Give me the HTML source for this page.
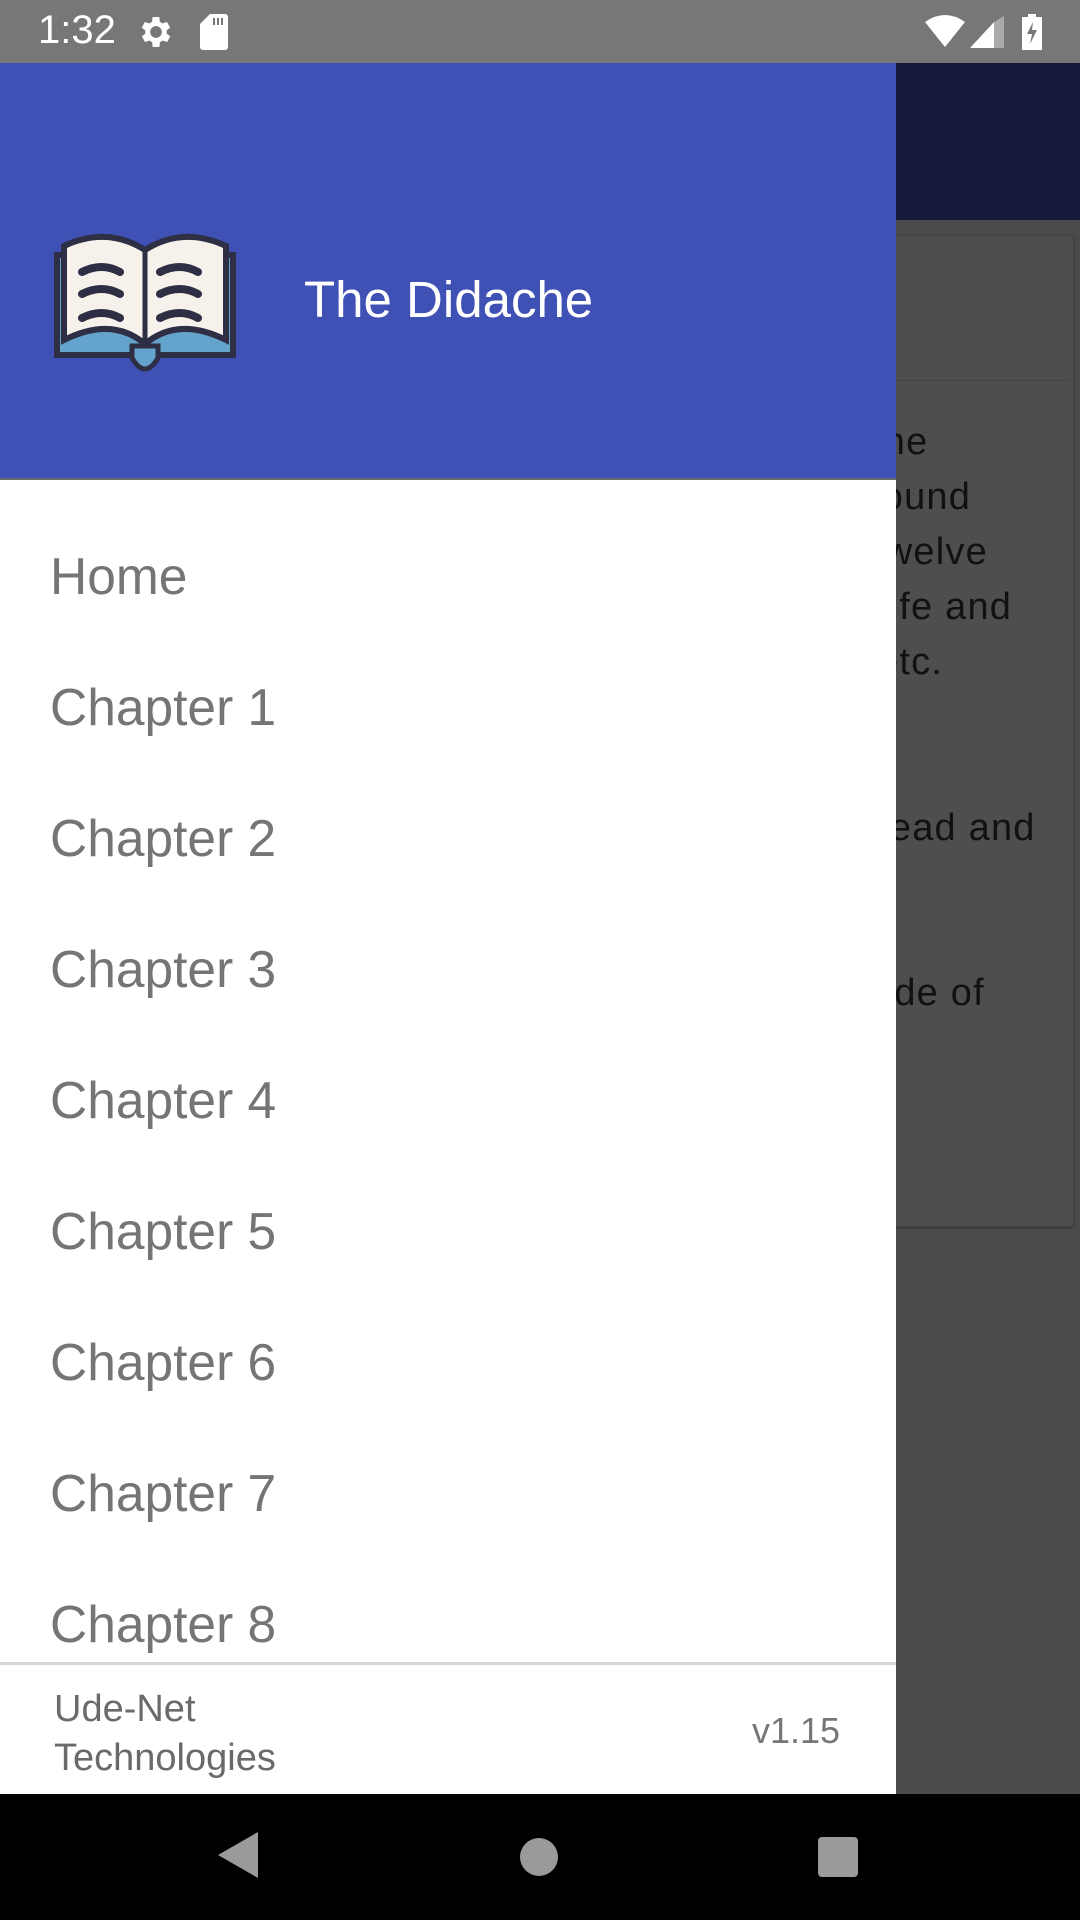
<!DOCTYPE html>
<html><head><meta charset="utf-8"><style>
*{margin:0;padding:0;box-sizing:border-box}
body{width:1080px;height:1920px;overflow:hidden;position:relative;background:#4b4b4b;font-family:"Liberation Sans",Roboto,sans-serif}
.abs{position:absolute}
#status{left:0;top:0;width:1080px;height:63px;background:#777777}
#appbar{left:896px;top:63px;width:184px;height:157px;background:#161939}
#card{left:880px;top:235px;width:194px;height:992px;background:#4e4e4e;border:1px solid #444;border-radius:4px;box-shadow:0 1px 3px rgba(0,0,0,.3)}
#cdiv{left:896px;top:380px;width:175px;height:1px;background:#444}
.ct{left:868px;font-size:38px;color:#111;white-space:nowrap;letter-spacing:1.2px}
#drawer{left:0;top:63px;width:896px;height:1731px;background:#fff}
#hdr{left:0;top:63px;width:896px;height:417px;background:#3f51b5;border-bottom:2px solid #6a6a6a}
.mi{left:50px;font-size:51.5px;color:#757575}
#nav{left:0;top:1794px;width:1080px;height:126px;background:#000}
</style></head><body>
<div class="abs" id="status"></div>
<div class="abs" style="left:38px;top:8px;font-size:40px;color:#fff">1:32</div>
<svg class="abs" style="left:136px;top:12px" width="40" height="40" viewBox="0 0 24 24"><path fill="#fff" d="M19.4 13a7.5 7.5 0 0 0 0-2l2.1-1.6-2-3.5-2.5 1a7 7 0 0 0-1.7-1L15 3h-4l-.4 2.9a7 7 0 0 0-1.7 1l-2.5-1-2 3.5L6.6 11a7.5 7.5 0 0 0 0 2l-2.1 1.6 2 3.5 2.5-1a7 7 0 0 0 1.7 1L11 21h4l.4-2.9a7 7 0 0 0 1.7-1l2.5 1 2-3.5zM13 15.5a3.5 3.5 0 1 1 0-7 3.5 3.5 0 0 1 0 7z" transform="translate(-1 0)"/></svg>
<svg class="abs" style="left:200px;top:14px" width="28" height="36" viewBox="0 0 28 36"><path fill="#fff" d="M10 0h15a3 3 0 0 1 3 3v30a3 3 0 0 1-3 3H3a3 3 0 0 1-3-3V10z"/><path stroke="#777" stroke-width="2" d="M14 4v7M18 4v7M22 4v7"/></svg>
<svg class="abs" style="left:925px;top:14px" width="40" height="34" viewBox="0 0 40 34"><path fill="#fff" d="M0 8Q20-6 40 8L20 33z"/></svg>
<svg class="abs" style="left:970px;top:16px" width="34" height="32" viewBox="0 0 34 32"><path fill="#fff" d="M0 32L24 6v26z"/><path fill="#aaa" d="M24 6L34 0v32H24z"/></svg>
<svg class="abs" style="left:1022px;top:14px" width="20" height="36" viewBox="0 0 20 36"><path fill="#fff" d="M6 0h8v3h6v33H0V3h6z"/><path fill="#777" d="M11 8L5 20h5l-2 10 7-14h-5z"/></svg>
<div class="abs" id="appbar"></div>
<div class="abs" id="card"></div>
<div class="abs" id="cdiv"></div>
<div class="abs ct" style="top:421px;left:872px">the</div>
<div class="abs ct" style="top:476px;left:870px">found</div>
<div class="abs ct" style="top:531px;left:873px">twelve</div>
<div class="abs ct" style="top:586px;left:880px">life and</div>
<div class="abs ct" style="top:641px;left:877px">etc.</div>
<div class="abs ct" style="top:807px;left:876px">read and</div>
<div class="abs ct" style="top:972px;left:872px">ede of</div>
<div class="abs" id="drawer"></div>
<div class="abs" id="hdr"></div>
<svg class="abs" style="left:52px;top:232px" width="186" height="144" viewBox="0 0 186 144">
<path d="M2 20h182v106H2z" fill="#2e2e44"/>
<path d="M8 26h170v94H8z" fill="#64a3cc"/>
<path d="M93 112Q60 84 12 108V14Q55-6 93 18Q131-6 174 14v94Q126 84 93 112z" fill="#f6f1ea" stroke="#2e2e44" stroke-width="6"/>
<path d="M93 18v94" stroke="#2e2e44" stroke-width="5"/>
<path d="M80 114h26v12q-13 22-26 0z" fill="#64a3cc" stroke="#2e2e44" stroke-width="5"/>
<g stroke="#2e2e44" stroke-width="8" fill="none" stroke-linecap="round"><path d="M26 48q20-10 38 0M26 70q20-10 38 0M26 94q20-10 38 0M104 48q20-10 38 0M104 70q20-10 38 0M104 94q20-10 38 0" transform="translate(4 -8)"/></g>
</svg>
<div class="abs" style="left:304px;top:270px;font-size:51px;color:#fff">The Didache</div>
<div class="abs mi" style="top:546px">Home</div>
<div class="abs mi" style="top:677px">Chapter 1</div>
<div class="abs mi" style="top:808px">Chapter 2</div>
<div class="abs mi" style="top:939px">Chapter 3</div>
<div class="abs mi" style="top:1070px">Chapter 4</div>
<div class="abs mi" style="top:1201px">Chapter 5</div>
<div class="abs mi" style="top:1332px">Chapter 6</div>
<div class="abs mi" style="top:1463px">Chapter 7</div>
<div class="abs mi" style="top:1594px">Chapter 8</div>
<div class="abs" style="left:0;top:1662px;width:896px;height:132px;background:#fff;border-top:3px solid #d6d6d6"></div>
<div class="abs" style="left:54px;top:1685px;font-size:38px;color:#6a6a6a;line-height:49px">Ude-Net<br>Technologies</div>
<div class="abs" style="left:752px;top:1710px;font-size:36px;color:#777">v1.15</div>
<div class="abs" id="nav"></div>
<svg class="abs" style="left:218px;top:1832px" width="40" height="46" viewBox="0 0 40 46"><path fill="#9a9a9a" d="M40 0v46L0 23z"/></svg>
<div class="abs" style="left:520px;top:1838px;width:38px;height:38px;border-radius:50%;background:#9a9a9a"></div>
<div class="abs" style="left:818px;top:1837px;width:40px;height:40px;border-radius:4px;background:#9a9a9a"></div>
</body></html>
